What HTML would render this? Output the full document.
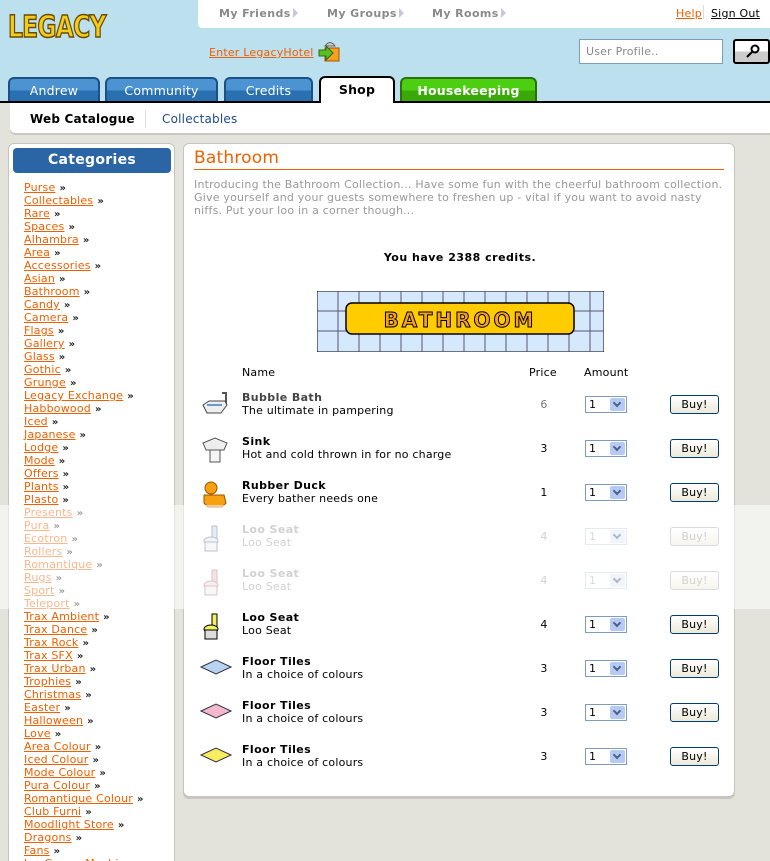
<!DOCTYPE html>
<html><head><meta charset="utf-8">
<style>
*{margin:0;padding:0;box-sizing:border-box}
html{width:770px;height:861px;overflow:hidden}
body{width:770px;height:861px;overflow:hidden;background:#e3e3db;font-family:"DejaVu Sans","Liberation Sans",sans-serif;font-size:11px;position:relative;color:#000;letter-spacing:0.2px}
.abs{position:absolute}
#hdr{left:0;top:0;width:770px;height:102px;background:#bde0ee}
#topbar{left:198px;top:0;width:572px;height:28px;background:#fff;border-bottom-left-radius:4px}
.tn{position:absolute;top:7px;color:#8a8a8a;font-weight:bold;font-size:11px;letter-spacing:0.4px}
.tn:after{content:"";display:inline-block;width:0;height:0;border-left:5px solid #c8c8d8;border-top:5px solid transparent;border-bottom:5px solid transparent;margin-left:2px;vertical-align:-1px}
.logo{left:8px;top:10px;font:bold 30px "DejaVu Sans",sans-serif;color:#f2cc1c;letter-spacing:-1px;-webkit-text-stroke:1.5px #6a4a00;transform:scaleX(0.78);transform-origin:left}
.tab{position:absolute;top:77px;height:25px;border:2px solid #1d4f87;border-bottom:none;border-radius:6px 6px 0 0;background:linear-gradient(#4c93d2 0,#4c93d2 50%,#2a6fb0 50%);color:#fff;font-size:12.5px;text-align:center;line-height:23px}
#line{left:0;top:101px;width:770px;height:2px;background:#000}
#sub{left:10px;top:103px;width:760px;height:30px;background:#fff;border-bottom-left-radius:5px;box-shadow:0 2px 0 #c8c8c0}
.box{background:#fff;border:1px solid #c4c4bc;border-radius:6px}
.cat a{display:block;color:#f06000;text-decoration:underline;height:13px;line-height:13px;font-size:11px;white-space:nowrap}
.cat a span{color:#222;text-decoration:none;display:inline-block;margin-left:4px;font-size:10px;font-weight:bold}
.row{position:absolute;left:0;width:552px;height:44px}
.nm{position:absolute;left:58px;top:4px;line-height:13px}
.nm b{letter-spacing:0.4px}
.pr{position:absolute;left:350px;width:20px;top:11px;text-align:center}
.sel{position:absolute;left:401px;top:9px;width:42px;height:17px;border:1px solid #7f9db9;background:#fff;font-size:11px;line-height:15px;padding-left:3px}
.sel i{position:absolute;right:1px;top:1px;width:15px;height:13px;background:#b6caf5;border-radius:2px}
.sel i:after{content:"";position:absolute;left:4px;top:2px;width:4px;height:4px;border-right:2px solid #4d6185;border-bottom:2px solid #4d6185;transform:rotate(45deg)}
.buy{position:absolute;left:486px;top:8px;width:49px;height:19px;border:1px solid #003c74;border-radius:3px;background:linear-gradient(#fff,#ece9d8);text-align:center;line-height:17px;font-size:11px}
.ic{position:absolute;left:16px;top:4px}
</style></head><body>
<div id="hdr" class="abs"></div>
<div id="topbar" class="abs">
<span class="tn" style="left:21px">My Friends</span>
<span class="tn" style="left:129px">My Groups</span>
<span class="tn" style="left:234px">My Rooms</span>
<span class="abs" style="left:478px;top:7px;color:#f06000;text-decoration:underline">Help</span>
<span class="abs" style="left:505px;top:5px;width:1px;height:14px;background:#ddd"></span>
<span class="abs" style="left:513px;top:7px;color:#000;text-decoration:underline">Sign Out</span>
</div>
<div class="abs logo">LEGACY</div>
<div class="abs" style="left:209px;top:46px;color:#f06000;text-decoration:underline">Enter LegacyHotel</div>
<svg class="abs" style="left:317px;top:38px" width="26" height="26"><path d="M8 8 Q13 1 18 8Z" fill="#ccc" stroke="#666"/><rect x="8" y="10" width="14" height="13" fill="#f7a020" stroke="#b05000"/><path d="M2 12h7v-4l7 7-7 7v-4H2z" fill="#5ac020" stroke="#2a6a10"/></svg>
<div class="abs" style="left:579px;top:39px;width:144px;height:25px;background:#fff;border:1px solid #7f9db9;color:#888;padding:5px 6px;font-size:11px">User Profile..</div>
<div class="abs" style="left:733px;top:39px;width:37px;height:25px;border:2px solid #000;border-radius:3px;background:linear-gradient(#fff 50%,#ccc 50%)"><svg width="33" height="21"><circle cx="20" cy="8" r="3.5" fill="none" stroke="#000" stroke-width="2"/><path d="M17 11l-5 5" stroke="#000" stroke-width="2"/></svg></div>
<div class="tab" style="left:8px;width:92px">Andrew</div>
<div class="tab" style="left:105px;width:113px">Community</div>
<div class="tab" style="left:224px;width:89px">Credits</div>
<div class="tab" style="left:319px;width:76px;top:76px;height:27px;background:#fff;color:#000;border-color:#000;font-weight:bold;z-index:2">Shop</div>
<div class="tab" style="left:400px;width:137px;background:linear-gradient(#4ccf10 0,#4ccf10 50%,#3aa808 50%);border-color:#2c6e10;font-weight:bold">Housekeeping</div>
<div id="line" class="abs"></div>
<div id="sub" class="abs">
<span class="abs" style="left:20px;top:9px;font-weight:bold;font-size:12px">Web Catalogue</span>
<span class="abs" style="left:135px;top:7px;width:1px;height:18px;background:#ddd"></span>
<span class="abs" style="left:152px;top:9px;color:#1f4b8a;font-size:12px">Collectables</span>
</div>

<div class="abs box" style="left:8px;top:143px;width:167px;height:730px">
<div class="abs" style="left:4px;top:4px;width:158px;height:25px;background:#2b65a5;border-radius:4px;color:#fff;font-size:14px;font-weight:bold;text-align:center;line-height:25px;letter-spacing:0.3px">Categories</div>
<div class="abs cat" style="left:15px;top:37px">
<a>Purse<span>»</span></a><a>Collectables<span>»</span></a><a>Rare<span>»</span></a><a>Spaces<span>»</span></a><a>Alhambra<span>»</span></a><a>Area<span>»</span></a><a>Accessories<span>»</span></a><a>Asian<span>»</span></a><a>Bathroom<span>»</span></a><a>Candy<span>»</span></a><a>Camera<span>»</span></a><a>Flags<span>»</span></a><a>Gallery<span>»</span></a><a>Glass<span>»</span></a><a>Gothic<span>»</span></a><a>Grunge<span>»</span></a><a>Legacy Exchange<span>»</span></a><a>Habbowood<span>»</span></a><a>Iced<span>»</span></a><a>Japanese<span>»</span></a><a>Lodge<span>»</span></a><a>Mode<span>»</span></a><a>Offers<span>»</span></a><a>Plants<span>»</span></a><a>Plasto<span>»</span></a><a>Presents<span>»</span></a><a>Pura<span>»</span></a><a>Ecotron<span>»</span></a><a>Rollers<span>»</span></a><a>Romantique<span>»</span></a><a>Rugs<span>»</span></a><a>Sport<span>»</span></a><a>Teleport<span>»</span></a><a>Trax Ambient<span>»</span></a><a>Trax Dance<span>»</span></a><a>Trax Rock<span>»</span></a><a>Trax SFX<span>»</span></a><a>Trax Urban<span>»</span></a><a>Trophies<span>»</span></a><a>Christmas<span>»</span></a><a>Easter<span>»</span></a><a>Halloween<span>»</span></a><a>Love<span>»</span></a><a>Area Colour<span>»</span></a><a>Iced Colour<span>»</span></a><a>Mode Colour<span>»</span></a><a>Pura Colour<span>»</span></a><a>Romantique Colour<span>»</span></a><a>Club Furni<span>»</span></a><a>Moodlight Store<span>»</span></a><a>Dragons<span>»</span></a><a>Fans<span>»</span></a><a>Ice Cream Machine<span>»</span></a>
</div>
</div>

<div class="abs box" style="left:183px;top:143px;width:552px;height:654px;box-shadow:0 2px 0 #c8c8c0">
<div class="abs" style="left:10px;top:4px;color:#f06000;font-size:17px">Bathroom</div>
<div class="abs" style="left:10px;top:25px;width:530px;height:1px;background:#f06000"></div>
<div class="abs" style="left:10px;top:34px;width:534px;color:#999;line-height:13px;letter-spacing:0.2px">Introducing the Bathroom Collection... Have some fun with the cheerful bathroom collection. Give yourself and your guests somewhere to freshen up - vital if you want to avoid nasty niffs. Put your loo in a corner though...</div>
<div class="abs" style="left:0;top:107px;width:552px;text-align:center;font-weight:bold;letter-spacing:0.5px">You have 2388 credits.</div>
<svg class="abs" style="left:133px;top:147px" width="287" height="61">
<rect x="0" y="0" width="287" height="61" fill="#d6e8fc" stroke="#000"/>
<g stroke="#557" stroke-width="1"><path d="M21 0v61M42 0v61M63 0v61M84 0v61M105 0v61M126 0v61M147 0v61M168 0v61M189 0v61M210 0v61M231 0v61M252 0v61M273 0v61M0 20h287M0 40h287"/></g>
<rect x="29" y="12" width="228" height="31" rx="6" fill="#fc0" stroke="#000" stroke-width="1.5"/>
<text x="143" y="36" text-anchor="middle" font-family="DejaVu Sans" font-weight="bold" font-size="20" fill="#f7a020" stroke="#000" stroke-width="1" letter-spacing="3">BATHROOM</text>
</svg>
<div class="abs" style="left:58px;top:222px">Name</div>
<div class="abs" style="left:345px;top:222px">Price</div>
<div class="abs" style="left:400px;top:222px">Amount</div>

<div class="abs" style="left:0;top:243px;width:552px">
<div class="row" style="top:0"><svg class="ic" width="30" height="30"><path d="M22 2h4v12" stroke="#555" fill="none" stroke-width="2"/><path d="M3 14l6-4h16l2 4-6 8H7z" fill="#eee" stroke="#444"/><path d="M7 14h15" stroke="#69c" stroke-width="2"/></svg><div class="nm" style="color:#444"><b>Bubble Bath</b><br><span style="color:#000">The ultimate in pampering</span></div><div class="pr" style="color:#777">6</div><div class="sel">1<i></i></div><div class="buy">Buy!</div></div>
<div class="row" style="top:44px"><svg class="ic" width="30" height="30"><path d="M3 8l12-5 12 5-3 7H6z" fill="#eee" stroke="#555"/><rect x="10" y="15" width="10" height="12" fill="#f4f4f4" stroke="#555"/></svg><div class="nm"><b>Sink</b><br>Hot and cold thrown in for no charge</div><div class="pr">3</div><div class="sel">1<i></i></div><div class="buy">Buy!</div></div>
<div class="row" style="top:88px"><svg class="ic" width="30" height="30"><circle cx="11" cy="9" r="6" fill="#f7a010" stroke="#a05000"/><path d="M4 16h20l2 8-4 4H8l-4-4z" fill="#f7a010" stroke="#a05000"/></svg><div class="nm"><b>Rubber Duck</b><br>Every bather needs one</div><div class="pr">1</div><div class="sel">1<i></i></div><div class="buy">Buy!</div></div>
<div class="row" style="top:132px"><svg class="ic" width="30" height="30"><path d="M12 3h5v14h-5z" fill="#bcd8f0" stroke="#778"/><ellipse cx="11" cy="18" rx="7" ry="4" fill="#dde8f4" stroke="#778"/><rect x="5" y="19" width="12" height="9" fill="#eee" stroke="#778"/></svg><div class="nm" style="color:#999"><b>Loo Seat</b><br>Loo Seat</div><div class="pr" style="color:#999">4</div><div class="sel" style="color:#aaa;border-color:#c0d0e0">1<i style="background:#dde6f6"></i></div><div class="buy" style="color:#999;border-color:#aab">Buy!</div></div>
<div class="row" style="top:176px"><svg class="ic" width="30" height="30"><path d="M12 3h5v14h-5z" fill="#f4b8c0" stroke="#988"/><ellipse cx="11" cy="18" rx="7" ry="4" fill="#f6d6dc" stroke="#988"/><rect x="5" y="19" width="12" height="9" fill="#eee" stroke="#988"/></svg><div class="nm" style="color:#999"><b>Loo Seat</b><br>Loo Seat</div><div class="pr" style="color:#999">4</div><div class="sel" style="color:#aaa;border-color:#c0d0e0">1<i style="background:#dde6f6"></i></div><div class="buy" style="color:#999;border-color:#aab">Buy!</div></div>
<div class="row" style="top:220px"><svg class="ic" width="30" height="30"><path d="M12 3h5v14h-5z" fill="#f4f060" stroke="#000"/><ellipse cx="11" cy="18" rx="7" ry="4" fill="#f4f060" stroke="#000"/><rect x="5" y="19" width="12" height="9" fill="#ddd" stroke="#000"/></svg><div class="nm"><b>Loo Seat</b><br>Loo Seat</div><div class="pr">4</div><div class="sel">1<i></i></div><div class="buy">Buy!</div></div>
<div class="row" style="top:264px"><svg class="ic" width="32" height="30"><path d="M1 12l15-7 15 7-15 7z" fill="#b8d4f0" stroke="#334"/></svg><div class="nm"><b>Floor Tiles</b><br>In a choice of colours</div><div class="pr">3</div><div class="sel">1<i></i></div><div class="buy">Buy!</div></div>
<div class="row" style="top:308px"><svg class="ic" width="32" height="30"><path d="M1 12l15-7 15 7-15 7z" fill="#f4b8cc" stroke="#334"/></svg><div class="nm"><b>Floor Tiles</b><br>In a choice of colours</div><div class="pr">3</div><div class="sel">1<i></i></div><div class="buy">Buy!</div></div>
<div class="row" style="top:352px"><svg class="ic" width="32" height="30"><path d="M1 12l15-7 15 7-15 7z" fill="#f8ec60" stroke="#334"/></svg><div class="nm"><b>Floor Tiles</b><br>In a choice of colours</div><div class="pr">3</div><div class="sel">1<i></i></div><div class="buy">Buy!</div></div>
</div>
</div>
<div class="abs" style="left:0;top:505px;width:770px;height:104px;background:rgba(255,255,255,0.55)"></div>
</body></html>
